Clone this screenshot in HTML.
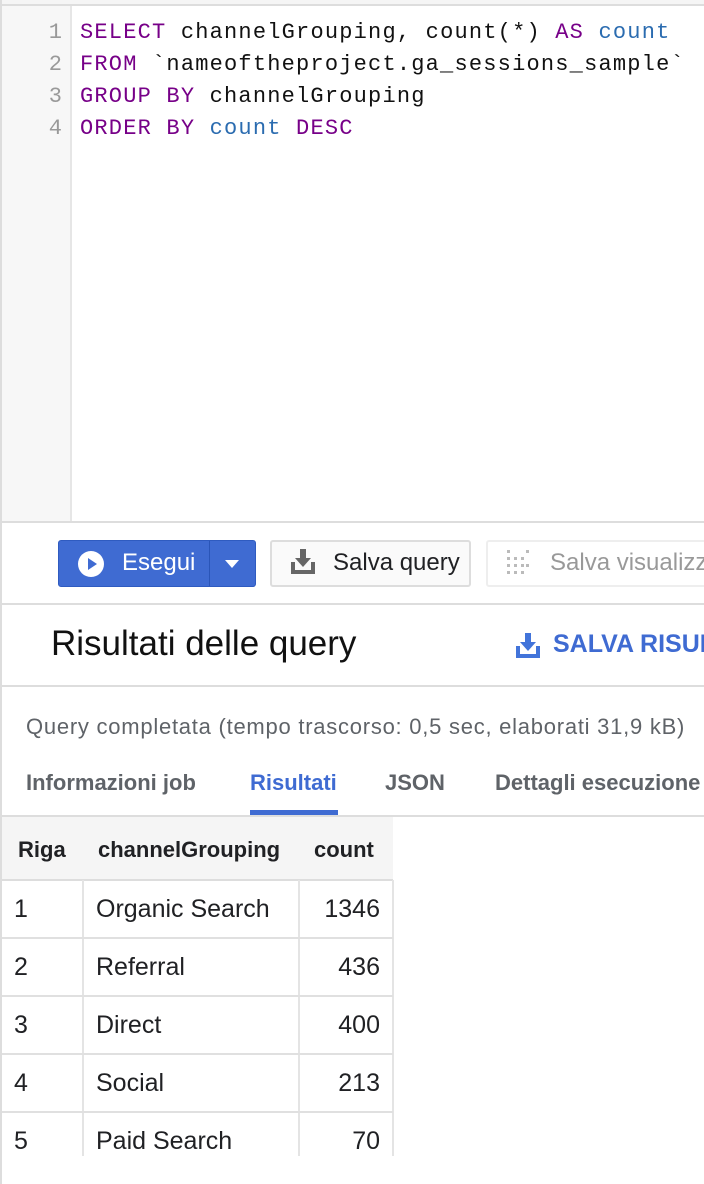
<!DOCTYPE html>
<html style="overflow:hidden"><head><meta charset="utf-8"><style>
*{margin:0;padding:0;box-sizing:border-box}
body{width:704px;height:1184px;background:#fff;position:relative;overflow:hidden;font-family:"Liberation Sans",sans-serif}
#w{position:absolute;left:0;top:0;width:704px;height:1184px;overflow:hidden}
.a{position:absolute}
.code{font-family:"Liberation Mono",monospace;font-size:22px;letter-spacing:1.2px;white-space:pre;color:#111}
.k{color:#770088}.b{color:#2b6cb0}
.ln{font-family:"Liberation Mono",monospace;font-size:22px;color:#999;width:62px;text-align:right}
.cell{position:absolute;font-size:25px;color:#202124}
</style></head><body><div id="w">
<div class="a" style="left:0;top:0;width:704px;height:4px;background:#f5f5f5"></div>
<div class="a" style="left:0;top:4px;width:704px;height:2px;background:#ddd"></div>
<div class="a" style="left:0;top:0;width:2px;height:1184px;background:#ddd"></div>
<div class="a" style="left:2px;top:6px;width:68px;height:516px;background:#f7f7f7"></div>
<div class="a" style="left:70px;top:6px;width:2px;height:516px;background:#e6e6e6"></div>
<div class="a" style="left:0;top:521px;width:704px;height:2px;background:#ddd"></div>
<div class="a ln" style="left:0;top:17px;line-height:32px">1<br>2<br>3<br>4</div>
<div class="a code" style="left:80px;top:17px;line-height:32px"><span class="k">SELECT</span> channelGrouping, count(*) <span class="k">AS</span> <span class="b">count</span>
<span class="k">FROM</span> `nameoftheproject.ga_sessions_sample`
<span class="k">GROUP BY</span> channelGrouping
<span class="k">ORDER BY</span> <span class="b">count</span> <span class="k">DESC</span></div>

<div class="a" style="left:58px;top:540px;width:198px;height:47px;background:#3f6bd2;border-radius:3px;border:1px solid #2f5bc0"></div>
<div class="a" style="left:209px;top:541px;width:1px;height:45px;background:#2a55b8"></div>
<svg class="a" style="left:77px;top:550px" width="28" height="28" viewBox="0 0 28 28"><circle cx="14" cy="14" r="13" fill="#fff"/><path d="M11 8v12l9-6z" fill="#3f6bd2"/></svg>
<div class="a" style="left:122px;top:549px;font-size:24px;color:#fff">Esegui</div>
<svg class="a" style="left:222px;top:559px" width="20" height="10"><path d="M3 1h14l-7 8z" fill="#fff"/></svg>

<div class="a" style="left:270px;top:540px;width:201px;height:47px;background:#fafafa;border:2px solid #ddd;border-radius:3px"></div>
<svg class="a" style="left:290px;top:548px" width="26" height="28" viewBox="0 0 26 28"><path d="M10 1h6v9h5l-8 9-8-9h5z" fill="#666"/><path d="M1 14h4v8h16v-8h4v12H1z" fill="#666"/></svg>
<div class="a" style="left:333px;top:549px;font-size:24px;color:#202124">Salva query</div>

<div class="a" style="left:486px;top:540px;width:230px;height:47px;border:2px solid #eee;border-radius:3px"></div>
<svg class="a" style="left:505px;top:548px" width="24" height="28"><g fill="#bbb"><rect x="2" y="2" width="3" height="3"/><rect x="2" y="9" width="3" height="3"/><rect x="2" y="16" width="3" height="3"/><rect x="2" y="23" width="3" height="3"/><rect x="9" y="9" width="3" height="3"/><rect x="9" y="16" width="3" height="3"/><rect x="9" y="23" width="3" height="3"/><rect x="16" y="9" width="3" height="3"/><rect x="16" y="16" width="3" height="3"/><rect x="16" y="23" width="3" height="3"/><rect x="21" y="2" width="3" height="3"/><rect x="21" y="16" width="3" height="3"/></g></svg>
<div class="a" style="left:550px;top:549px;font-size:24px;color:#999;white-space:nowrap">Salva visualizzazione</div>

<div class="a" style="left:0;top:603px;width:704px;height:2px;background:#ddd"></div>
<div class="a" style="left:51px;top:624px;font-size:35px;color:#111;white-space:nowrap">Risultati delle query</div>
<svg class="a" style="left:515px;top:632px" width="26" height="28" viewBox="0 0 26 28"><path d="M10 1h6v9h5l-8 9-8-9h5z" fill="#4274da"/><path d="M1 14h4v8h16v-8h4v12H1z" fill="#4274da"/></svg>
<div class="a" style="left:553px;top:630px;font-size:25px;font-weight:bold;color:#3f6bd2;white-space:nowrap">SALVA RISULTATI</div>
<div class="a" style="left:0;top:685px;width:704px;height:2px;background:#ddd"></div>

<div class="a" style="left:26px;top:714px;font-size:22px;letter-spacing:0.75px;color:#5f6368;white-space:nowrap">Query completata (tempo trascorso: 0,5 sec, elaborati 31,9 kB)</div>
<div class="a" style="left:26px;top:770px;font-size:22px;font-weight:bold;color:#5f6368;white-space:nowrap">Informazioni job</div>
<div class="a" style="left:250px;top:770px;font-size:22px;font-weight:bold;color:#3f6bd2">Risultati</div>
<div class="a" style="left:385px;top:770px;font-size:22px;font-weight:bold;color:#5f6368">JSON</div>
<div class="a" style="left:495px;top:770px;font-size:22px;font-weight:bold;color:#5f6368;white-space:nowrap">Dettagli esecuzione</div>
<div class="a" style="left:250px;top:810px;width:88px;height:5px;background:#3f6bd2"></div>
<div class="a" style="left:0;top:815px;width:704px;height:2px;background:#ddd"></div>

<div class="a" style="left:2px;top:817px;width:391px;height:63px;background:#f5f5f5"></div>
<div class="a" style="left:18px;top:837px;font-size:22px;font-weight:bold;color:#202124">Riga</div>
<div class="a" style="left:98px;top:837px;font-size:22px;font-weight:bold;color:#202124">channelGrouping</div>
<div class="a" style="left:314px;top:837px;font-size:22px;font-weight:bold;color:#202124">count</div>
<div class="a" style="left:2px;top:879px;width:391px;height:2px;background:#ddd"></div>
<div class="a" style="left:82px;top:880px;width:2px;height:276px;background:#e4e4e4"></div>
<div class="a" style="left:298px;top:880px;width:2px;height:276px;background:#e4e4e4"></div>
<div class="a" style="left:392px;top:880px;width:2px;height:276px;background:#e4e4e4"></div>
<div class="a" style="left:2px;top:937px;width:391px;height:2px;background:#e0e0e0"></div>
<div class="a" style="left:2px;top:995px;width:391px;height:2px;background:#e0e0e0"></div>
<div class="a" style="left:2px;top:1053px;width:391px;height:2px;background:#e0e0e0"></div>
<div class="a" style="left:2px;top:1111px;width:391px;height:2px;background:#e0e0e0"></div>

<div class="cell" style="left:14px;top:895px">1</div><div class="cell" style="left:96px;top:895px">Organic Search</div><div class="cell" style="left:300px;width:80px;text-align:right;top:895px">1346</div>
<div class="cell" style="left:14px;top:953px">2</div><div class="cell" style="left:96px;top:953px">Referral</div><div class="cell" style="left:300px;width:80px;text-align:right;top:953px">436</div>
<div class="cell" style="left:14px;top:1011px">3</div><div class="cell" style="left:96px;top:1011px">Direct</div><div class="cell" style="left:300px;width:80px;text-align:right;top:1011px">400</div>
<div class="cell" style="left:14px;top:1069px">4</div><div class="cell" style="left:96px;top:1069px">Social</div><div class="cell" style="left:300px;width:80px;text-align:right;top:1069px">213</div>
<div class="cell" style="left:14px;top:1127px">5</div><div class="cell" style="left:96px;top:1127px">Paid Search</div><div class="cell" style="left:300px;width:80px;text-align:right;top:1127px">70</div>
<div class="a" style="left:2px;top:1156px;width:420px;height:28px;background:#fff"></div>
</div></body></html>
